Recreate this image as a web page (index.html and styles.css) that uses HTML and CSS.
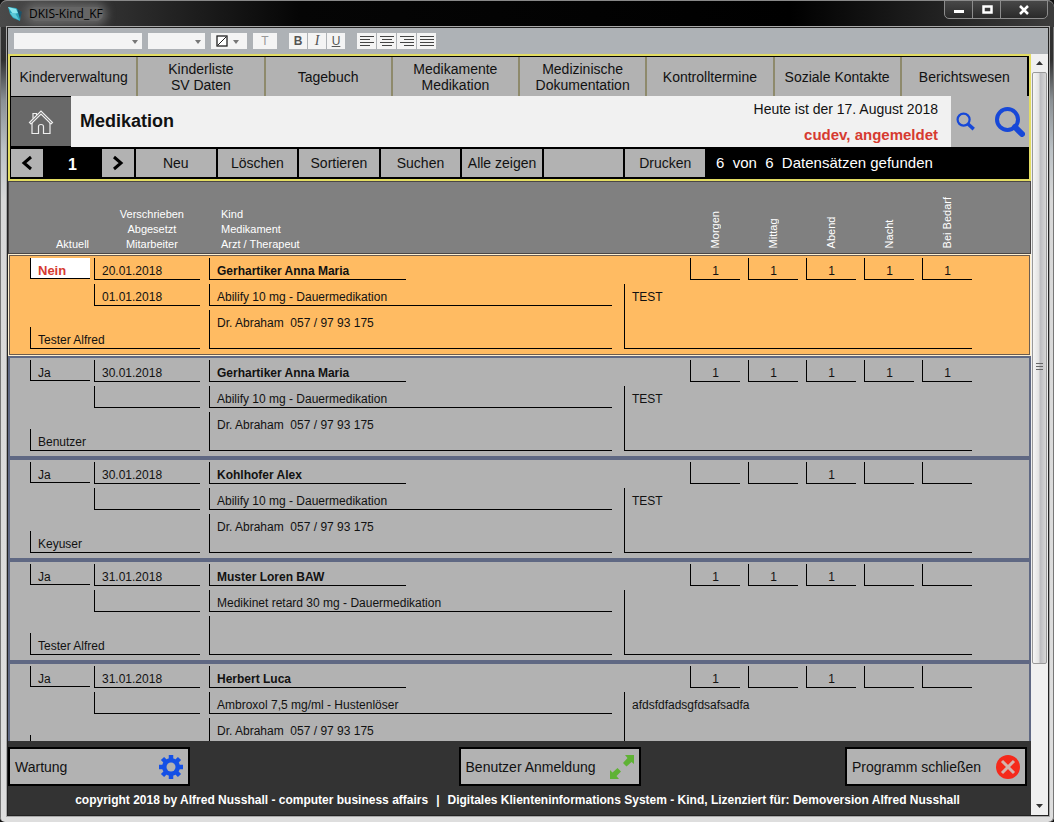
FILE: index.html
```html
<!DOCTYPE html>
<html lang="de">
<head>
<meta charset="utf-8">
<title>DKIS-Kind_KF</title>
<link rel="stylesheet" href="styles.css">
</head>
<body>
<div class="window">
	<div class="titlebar">
		<svg class="app-icon" viewBox="0 0 16 16" width="16" height="16">
			<path d="M1 1 L9 2 L14 6 L13 15 L6 12 L3 8 Z" fill="#2ba6bd"/>
			<path d="M1 1 L9 3 L11 7 L6 8 Z" fill="#8be6ee"/>
			<path d="M3 7 L8 7 L12 14 L6 11 Z" fill="#5cc9d8"/>
			<path d="M10 3 L15 6 L13 13 Z" fill="#14506a"/>
		</svg>
		<span class="caption">DKIS-Kind_KF</span>
		<div class="window-buttons">
			<button title="Minimieren"><svg viewBox="0 0 14 10" width="14" height="10"><rect x="2" y="5" width="10" height="3" fill="#fff"/></svg></button>
			<button title="Maximieren"><svg viewBox="0 0 14 10" width="14" height="10"><rect x="3.5" y="1.5" width="8" height="6" fill="none" stroke="#fff" stroke-width="2.5"/></svg></button>
			<button class="close" title="Schließen"><svg viewBox="0 0 14 10" width="14" height="10"><path d="M3 1 L11 9 M11 1 L3 9" stroke="#fff" stroke-width="2.5"/></svg></button>
		</div>
	</div>

	<div class="client">
		<div class="toolbar">
			<span class="combo font"><select aria-label="Schriftart"><option></option></select></span>
			<span class="combo size"><select aria-label="Schriftgrad"><option></option></select></span>
			<button class="color" title="Farbe">
				<svg viewBox="0 0 28 12" width="28" height="12"><rect x="2" y="1" width="10" height="10" fill="#fff" stroke="#222" stroke-width="1.3"/><path d="M3 10 L11 2" stroke="#222"/><path d="M18 5 h6 l-3 4 z" fill="#777"/></svg>
			</button>
			<button class="text" title="Text">T</button>
			<div class="group style">
				<button title="Fett"><b>B</b></button>
				<button title="Kursiv"><i>I</i></button>
				<button title="Unterstrichen"><u>U</u></button>
			</div>
			<div class="group align">
				<button title="Links"><svg viewBox="0 0 14 10" width="14" height="10"><path d="M0 .5h14M0 3.5h10M0 6.5h14M0 9.5h10"/></svg></button>
				<button title="Zentriert"><svg viewBox="0 0 14 10" width="14" height="10"><path d="M0 .5h14M2 3.5h10M0 6.5h14M2 9.5h10"/></svg></button>
				<button title="Rechts"><svg viewBox="0 0 14 10" width="14" height="10"><path d="M0 .5h14M4 3.5h10M0 6.5h14M4 9.5h10"/></svg></button>
				<button title="Blocksatz"><svg viewBox="0 0 14 10" width="14" height="10"><path d="M0 .5h14M0 3.5h14M0 6.5h14M0 9.5h14"/></svg></button>
			</div>
		</div>

		<div class="body">
			<div class="main">
				<header class="header">
					<nav class="nav">
						<a href="#kinder">Kinderverwaltung</a>
						<a href="#liste">Kinderliste<br>SV Daten</a>
						<a href="#tagebuch">Tagebuch</a>
						<a href="#medikamente">Medikamente<br>Medikation</a>
						<a href="#doku">Medizinische<br>Dokumentation</a>
						<a href="#termine">Kontrolltermine</a>
						<a href="#kontakte">Soziale Kontakte</a>
						<a href="#berichte">Berichtswesen</a>
					</nav>
					<div class="title-row">
						<a class="home" href="#home" title="Start">
							<svg viewBox="0 0 26 26" width="26" height="26" fill="none" stroke="#eee" stroke-width="1.2">
								<path d="M1.500 13.500 L13 2 L24.500 13.500 L23 15 L13 5 L3 15 Z"/>
								<path d="M4 14 V24.500 H10.500 V17.500 Q10.500 15.500 13 15.500 Q15.500 15.500 15.500 17.500 V24.500 H22 V14"/>
								<path d="M5 9.500 V4.500 H8.500 V6"/>
							</svg>
						</a>
						<h1>Medikation</h1>
						<div class="session">
							<span>Heute ist der 17. August 2018</span>
							<strong>cudev, angemeldet</strong>
						</div>
						<div class="search">
							<button title="Schnellsuche"><svg viewBox="0 0 30 30" width="19" height="19" fill="none" stroke="#1748d8"><circle cx="12" cy="12" r="9.500" stroke-width="3.500"/><path d="M19 19 L28 27" stroke-width="5.500"/></svg></button>
							<button title="Suche"><svg viewBox="0 0 30 30" width="30" height="30" fill="none" stroke="#1748d8"><circle cx="12.500" cy="12.500" r="10.500" stroke-width="4"/><path d="M20 20 L27 27" stroke-width="6" stroke-linecap="round"/></svg></button>
						</div>
					</div>
					<div class="actions">
						<button class="step" title="Zurück"><svg viewBox="0 0 12 16" width="12" height="16"><path d="M10 2 L3 8 L10 14"/></svg></button>
						<span class="position">1</span>
						<button class="step" title="Weiter"><svg viewBox="0 0 12 16" width="12" height="16"><path d="M2 2 L9 8 L2 14"/></svg></button>
						<div class="commands">
							<button>Neu</button>
							<button>Löschen</button>
							<button>Sortieren</button>
							<button>Suchen</button>
							<button>Alle zeigen</button>
							<button aria-label="Frei"></button>
							<button>Drucken</button>
						</div>
						<span class="found">6&nbsp; von&nbsp; 6&nbsp; Datensätzen gefunden</span>
					</div>
				</header>

				<div class="labels">
					<div class="label-left">
						<span class="label-current">Aktuell</span>
						<span class="label-dates">Verschrieben<br>Abgesetzt<br>Mitarbeiter</span>
					</div>
					<div class="label-middle">Kind<br>Medikament<br>Arzt / Therapeut</div>
					<div class="label-right">
						<span>Morgen</span><span>Mittag</span><span>Abend</span><span>Nacht</span><span>Bei Bedarf</span>
					</div>
				</div>

				<div class="records">
					<article class="record selected">
						<div class="left">
							<div class="field current no">Nein</div>
							<div class="field">20.01.2018</div>
							<div class="field stopped">01.01.2018</div>
							<div class="field staff">Tester Alfred</div>
						</div>
						<div class="middle">
							<div class="field name">Gerhartiker Anna Maria</div>
							<div class="field">Abilify 10 mg - Dauermedikation</div>
							<div class="field doctor">Dr. Abraham&nbsp; 057 / 97 93 175</div>
						</div>
						<div class="right">
							<div class="doses">
								<div class="field">1</div><div class="field">1</div><div class="field">1</div><div class="field">1</div><div class="field">1</div>
							</div>
							<div class="field note">TEST</div>
						</div>
					</article>

					<article class="record">
						<div class="left">
							<div class="field current">Ja</div>
							<div class="field">30.01.2018</div>
							<div class="field stopped"></div>
							<div class="field staff">Benutzer</div>
						</div>
						<div class="middle">
							<div class="field name">Gerhartiker Anna Maria</div>
							<div class="field">Abilify 10 mg - Dauermedikation</div>
							<div class="field doctor">Dr. Abraham&nbsp; 057 / 97 93 175</div>
						</div>
						<div class="right">
							<div class="doses">
								<div class="field">1</div><div class="field">1</div><div class="field">1</div><div class="field">1</div><div class="field">1</div>
							</div>
							<div class="field note">TEST</div>
						</div>
					</article>

					<article class="record">
						<div class="left">
							<div class="field current">Ja</div>
							<div class="field">30.01.2018</div>
							<div class="field stopped"></div>
							<div class="field staff">Keyuser</div>
						</div>
						<div class="middle">
							<div class="field name">Kohlhofer Alex</div>
							<div class="field">Abilify 10 mg - Dauermedikation</div>
							<div class="field doctor">Dr. Abraham&nbsp; 057 / 97 93 175</div>
						</div>
						<div class="right">
							<div class="doses">
								<div class="field"></div><div class="field"></div><div class="field">1</div><div class="field"></div><div class="field"></div>
							</div>
							<div class="field note">TEST</div>
						</div>
					</article>

					<article class="record">
						<div class="left">
							<div class="field current">Ja</div>
							<div class="field">31.01.2018</div>
							<div class="field stopped"></div>
							<div class="field staff">Tester Alfred</div>
						</div>
						<div class="middle">
							<div class="field name">Muster Loren BAW</div>
							<div class="field">Medikinet retard 30 mg - Dauermedikation</div>
							<div class="field doctor"></div>
						</div>
						<div class="right">
							<div class="doses">
								<div class="field">1</div><div class="field">1</div><div class="field">1</div><div class="field"></div><div class="field"></div>
							</div>
							<div class="field note"></div>
						</div>
					</article>

					<article class="record">
						<div class="left">
							<div class="field current">Ja</div>
							<div class="field">31.01.2018</div>
							<div class="field stopped"></div>
							<div class="field staff"></div>
						</div>
						<div class="middle">
							<div class="field name">Herbert Luca</div>
							<div class="field">Ambroxol 7,5 mg/ml - Hustenlöser</div>
							<div class="field doctor">Dr. Abraham&nbsp; 057 / 97 93 175</div>
						</div>
						<div class="right">
							<div class="doses">
								<div class="field">1</div><div class="field"></div><div class="field">1</div><div class="field"></div><div class="field"></div>
							</div>
							<div class="field note">afdsfdfadsgfdsafsadfa</div>
						</div>
					</article>
				</div>

				<footer class="footer">
					<div class="footer-buttons">
						<button>Wartung
							<svg viewBox="0 0 24 24" width="24" height="24">
								<g stroke="#1450e6" stroke-width="4.500"><path d="M12 0V24M0 12H24M3.500 3.500L20.500 20.500M20.500 3.500L3.500 20.500"/></g>
								<circle cx="12" cy="12" r="9" fill="#1450e6"/><circle cx="12" cy="12" r="4.500" fill="#b2b2b2"/>
							</svg>
						</button>
						<button>Benutzer Anmeldung
							<svg viewBox="0 0 24 24" width="24" height="24" fill="#5fb234">
								<path d="M15 0 H24 V9 L21.500 7 L16.500 11.500 L13 8 L17.500 3 Z"/>
								<path d="M0 15 L2.500 17.500 L7.500 13 L11 16.500 L6.500 21 L9 24 H0 Z"/>
							</svg>
						</button>
						<button>Programm schließen
							<svg viewBox="0 0 24 24" width="24" height="24"><circle cx="12" cy="12" r="12" fill="#f5291b"/><path d="M6 6 L18 18 M18 6 L6 18" stroke="#d5b3ae" stroke-width="3"/></svg>
						</button>
					</div>
					<p class="copyright">
						<span>copyright 2018 by Alfred Nusshall - computer business affairs</span>
						<span>|</span>
						<span>Digitales Klienteninformations System - Kind, Lizenziert für: Demoversion Alfred Nusshall</span>
					</p>
				</footer>
			</div>

			<div class="scrollbar">
				<button title="Nach oben"><svg viewBox="0 0 7 4" width="7" height="4"><path d="M0 4 L3.500 0 L7 4 Z" fill="#333"/></svg></button>
				<div class="thumb"><svg viewBox="0 0 7 9" width="7" height="9"><path d="M0 .5h7M0 3.500h7M0 6.500h7" stroke="#666"/></svg></div>
				<div class="track"></div>
				<button title="Nach unten"><svg viewBox="0 0 7 4" width="7" height="4"><path d="M0 0 L3.500 4 L7 0 Z" fill="#333"/></svg></button>
			</div>
		</div>
	</div>
</div>
</body>
</html>
```
FILE: styles.css
```css
* {
	box-sizing: border-box;
}
body {
	margin: 0;
	background: #111;
	font-family: "Liberation Sans", Arial, sans-serif;
	font-size: 12px;
	color: #111;
}
button {
	margin: 0;
	padding: 0;
	border: 0;
	font: inherit;
	color: inherit;
	background: none;
}
svg {
	display: block;
	flex: none;
}
a {
	color: inherit;
	text-decoration: none;
}

/* window frame */
.window {
	display: flex;
	flex-direction: column;
	height: 100vh;
	padding: 0 5px 6px 7px;
	border-radius: 7px 7px 5px 5px;
	background: linear-gradient(#333 0, #303030 60px, #8a9094 100px, #bcc2c6 150px, #d8d8d8 200px, #dedede 100%);
	box-shadow: inset 1px 1px 0 #777, inset -1px 0 0 #777;
	overflow: hidden;
}
.titlebar {
	display: flex;
	flex: none;
	height: 27px;
	margin: 0 -5px 0 -7px;
	padding-left: 7px;
	border-top: 1px solid #888;
	border-radius: 7px 7px 0 0;
	background: linear-gradient(90deg, #4a4a4a 0, #333 100px, #050505 300px, #000 75%, #3c3c3c 100%);
}
.app-icon {
	margin-top: 5px;
}
.caption {
	align-self: center;
	margin-left: 6px;
	font-family: "Open Sans", "Noto Sans", sans-serif;
	font-size: 12px;
	line-height: 14px;
	color: #000;
	background: #666;
	border-radius: 8px;
	box-shadow: 0 0 8px 4px #666;
}
.window-buttons {
	display: flex;
	height: 19px;
	margin: -1px 6px 0 auto;
	border: 1px solid #8c8c8c;
	border-radius: 0 0 5px 5px;
	background: linear-gradient(#484848, #2a2a2a);
}
.window-buttons button {
	display: flex;
	align-items: center;
	justify-content: center;
	width: 28px;
	border-right: 1px solid #8c8c8c;
}
.window-buttons .close {
	width: 46px;
	border-right: 0;
}
.client {
	display: flex;
	flex: 1;
	flex-direction: column;
	min-height: 0;
	border: 1px solid #222;
	outline: 1px solid #a8a8a8;
}

/* format toolbar */
.toolbar {
	display: flex;
	flex: none;
	align-items: center;
	height: 26px;
	padding-left: 6px;
	background: #aeb2b6;
}
.toolbar button,
.combo {
	display: flex;
	align-items: center;
	justify-content: center;
	height: 16px;
	background: #f4f4f4;
	color: #555;
}
.combo {
	position: relative;
	margin-right: 6px;
}
.combo select {
	width: 100%;
	height: 16px;
	border: 0;
	background: none;
	appearance: none;
}
.combo::after {
	content: "";
	position: absolute;
	right: 4px;
	top: 7px;
	border: 3px solid transparent;
	border-top: 4px solid #777;
	border-bottom: 0;
}
.font {
	width: 128px;
}
.size {
	width: 57px;
}
.toolbar .color {
	width: 36px;
	margin-right: 6px;
}
.toolbar .text {
	width: 24px;
	margin-right: 12px;
	color: #999;
}
.group {
	display: flex;
	gap: 1px;
	margin-right: 12px;
}
.style button {
	width: 18px;
}
.style i {
	font-family: "Liberation Serif", serif;
	font-size: 14px;
}
.align button {
	width: 19px;
}
.align svg {
	stroke: #444;
}

.body {
	display: flex;
	flex: 1;
	min-height: 0;
}
.main {
	display: flex;
	flex: 1;
	flex-direction: column;
	min-width: 0;
}

/* yellow framed header */
.header {
	flex: none;
	border: 2px solid #e2dc62;
	background: #000;
}
.nav {
	display: grid;
	grid-template-columns: repeat(8, 1fr);
	height: 40px;
	padding: 1px 0 0 1px;
}
.nav a {
	display: flex;
	align-items: center;
	justify-content: center;
	border-right: 2px solid #8e8a6c;
	background: #b2b2b2;
	font-size: 14px;
	line-height: 16px;
	text-align: center;
	white-space: nowrap;
}
.nav a:last-child {
	border-right-color: #000;
}
.title-row {
	display: flex;
	height: 51px;
	background: #f1f1f1;
}
.home {
	display: flex;
	align-items: center;
	justify-content: center;
	width: 61px;
	border: solid #000;
	border-width: 1px 0 1px 1px;
	background: #686868;
}
.title-row h1 {
	margin: 0 auto 0 9px;
	font-size: 18px;
	line-height: 50px;
}
.session {
	display: flex;
	flex-direction: column;
	align-items: flex-end;
	margin-right: 13px;
	font-size: 14px;
	line-height: 26px;
}
.session strong {
	color: #d63a30;
	font-size: 15px;
}
.search {
	display: flex;
	align-items: center;
	justify-content: space-between;
	width: 78px;
	padding: 0 4px 0 5px;
	background: #b2b2b2;
}
.actions {
	display: flex;
	height: 32px;
	padding: 2px 0 2px 1px;
	color: #fff;
}
.actions button {
	display: flex;
	align-items: center;
	justify-content: center;
	background: #b2b2b2;
	color: #111;
	font-size: 14px;
	white-space: nowrap;
}
.actions .step {
	width: 32px;
}
.step svg {
	fill: none;
	stroke: #000;
	stroke-width: 3px;
}
.position {
	width: 59px;
	font-size: 16px;
	font-weight: bold;
	line-height: 32px;
	text-align: center;
}
.commands {
	display: grid;
	grid-template-columns: repeat(7, 1fr);
	gap: 2px;
	flex: 0 1 569px;
	margin-left: 2px;
}
.found {
	margin-left: 11px;
	font-size: 15px;
	line-height: 28px;
	white-space: nowrap;
}

/* column labels, same columns as a record */
.labels,
.record {
	display: flex;
	flex: none;
	padding: 2px 57px 0 20px;
	border: solid #5f6883;
	border-width: 2px;
}
.labels {
	height: 73px;
	border: 1px solid #4a4646;
	padding: 0 58px 1px 21px;
	align-items: flex-end;
	background: #808080;
	color: #fff;
	font-size: 11px;
	line-height: 15px;
}
.label-left,
.left {
	flex: 0 0 170px;
	margin-right: 9px;
}
.label-middle,
.middle {
	flex: 403 1 0;
	min-width: 0;
	margin-right: 12px;
}
.label-right,
.right {
	flex: 348 1 0;
	min-width: 0;
}
.label-left {
	display: flex;
	align-items: flex-end;
	justify-content: space-between;
	padding: 0 16px 0 26px;
}
.label-dates {
	text-align: center;
}
.label-middle {
	padding-left: 12px;
}
.label-right {
	display: flex;
	justify-content: flex-end;
	gap: 8px;
	padding-bottom: 4px;
}
.label-right span {
	width: 50px;
	padding-right: 17px;
	line-height: 16px;
	writing-mode: vertical-rl;
	transform: rotate(180deg);
	white-space: nowrap;
}

/* records */
.records {
	display: flex;
	flex: 1;
	flex-direction: column;
	min-height: 0;
	overflow: hidden;
	background: #b2b2b2;
}
.record {
	height: 102px;
	background: #b2b2b2;
}
.record.selected {
	border: 1px solid #fff0d0;
	padding: 3px 58px 0 21px;
	background: #ffbb62;
	box-shadow: inset 0 0 0 1px #6b5c50;
}
.field {
	height: 22px;
	padding-left: 7px;
	border: solid #000;
	border-width: 0 0 1px 1px;
	line-height: 26px;
	white-space: nowrap;
}
.left {
	display: grid;
	grid-template-columns: 60px 106px;
	grid-template-rows: 22px 22px 13px 22px;
	column-gap: 4px;
	row-gap: 4px;
	align-content: start;
}
.current {
	height: 21px;
}
.no {
	background: #fff;
	color: #d63a30;
	font-size: 13px;
	font-weight: bold;
}
.stopped {
	grid-column: 2;
}
.staff {
	grid-column: 1 / 3;
	grid-row: 4;
}
.middle .field,
.doses {
	margin-bottom: 4px;
}
.middle .name {
	width: 197px;
	font-weight: bold;
}
.middle .doctor {
	height: 39px;
}
.right .note {
	height: 65px;
}
.doses {
	display: flex;
	justify-content: flex-end;
	gap: 8px;
}
.doses .field {
	width: 50px;
	padding-left: 0;
	text-align: center;
}

/* footer */
.footer {
	flex: none;
	height: 74px;
	padding: 6px 4px 0 0;
	background: #333;
}
.footer-buttons {
	display: grid;
	grid-template-columns: 450fr 386fr 182px;
}
.footer-buttons button {
	display: flex;
	align-items: center;
	justify-content: space-between;
	width: 182px;
	height: 39px;
	padding: 0 5px;
	border: 2px solid #000;
	background: #b2b2b2;
	font-size: 14px;
	white-space: nowrap;
}
.copyright {
	display: flex;
	justify-content: center;
	gap: 8px;
	margin: 6px 0 0;
	color: #fff;
	font-weight: bold;
	line-height: 16px;
	white-space: nowrap;
}

.scrollbar {
	display: flex;
	flex: none;
	flex-direction: column;
	width: 17px;
	background: #f0f0f0;
}
.scrollbar button,
.thumb {
	display: flex;
	align-items: center;
	justify-content: center;
}
.scrollbar button {
	height: 18px;
}
.thumb {
	flex: 592;
	margin: 0 1px;
	border: 1px solid #999;
	border-radius: 2px;
	background: linear-gradient(90deg, #f6f6f6, #e2e2e2 45%, #bcbcc0 55%, #d6d6d6);
}
.track {
	flex: 134;
}
```
